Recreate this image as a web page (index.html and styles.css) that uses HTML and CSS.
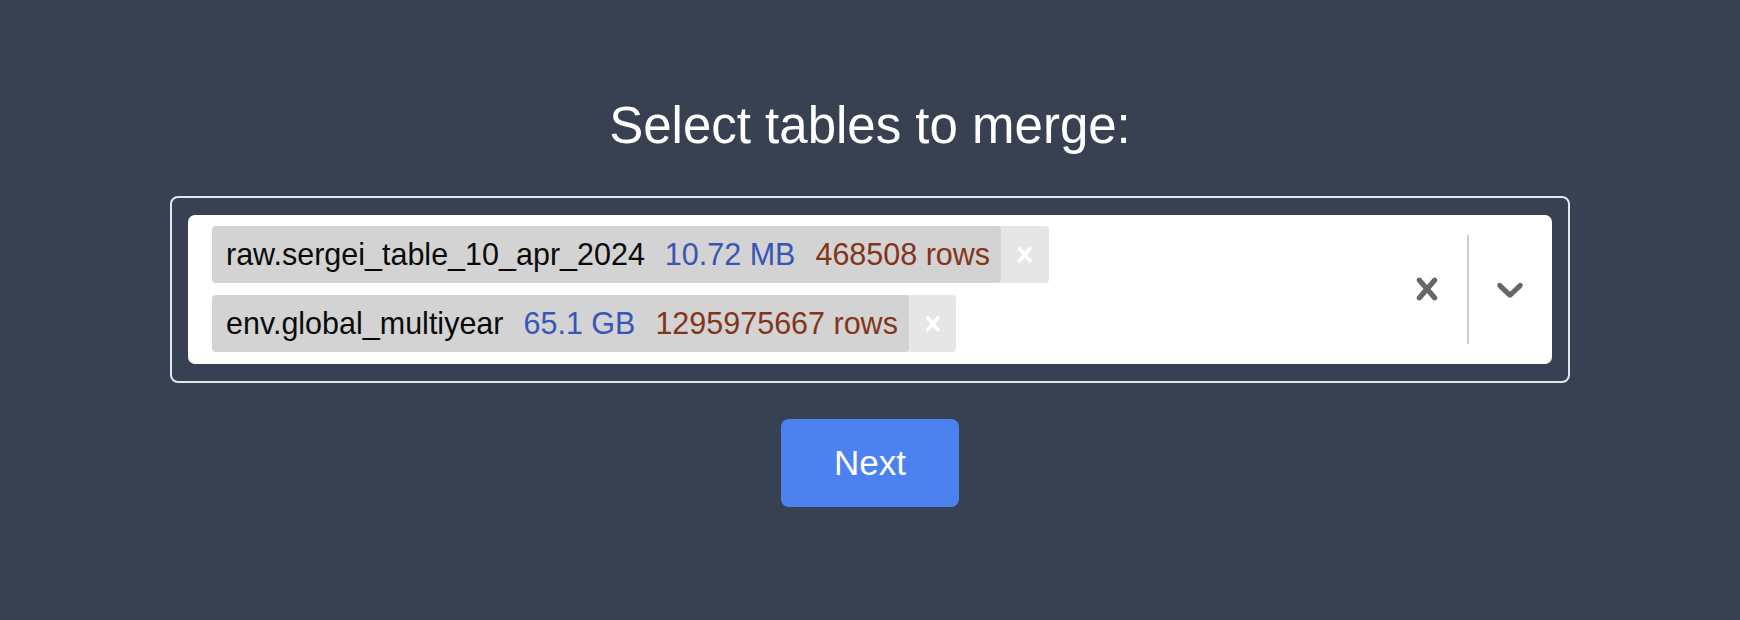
FILE: index.html
```html
<!DOCTYPE html>
<html lang="en">
<head>
<meta charset="utf-8">
<title>Select tables to merge</title>
<link rel="stylesheet" href="styles.css">
</head>
<body>
<main class="page">
  <h1 class="title">Select tables to merge:</h1>
  <div class="select-frame">
    <div class="select-control">
      <div class="values">
        <div class="chip">
          <div class="chip-label">
            <span class="tbl-name">raw.sergei_table_10_apr_2024</span>
            <span class="tbl-size">10.72 MB</span>
            <span class="tbl-rows">468508 rows</span>
          </div>
          <div class="chip-remove">
            <svg class="chip-x" viewBox="0 0 20 20" aria-hidden="true"><path d="M14.348 14.849c-0.469 0.469-1.229 0.469-1.697 0l-2.651-3.030-2.651 3.029c-0.469 0.469-1.229 0.469-1.697 0-0.469-0.469-0.469-1.229 0-1.697l2.758-3.15-2.759-3.152c-0.469-0.469-0.469-1.228 0-1.697s1.228-0.469 1.697 0l2.652 3.031 2.651-3.031c0.469-0.469 1.228-0.469 1.697 0s0.469 1.229 0 1.697l-2.758 3.152 2.758 3.150c0.469 0.469 0.469 1.229 0 1.698z"/></svg>
          </div>
        </div>
        <div class="chip">
          <div class="chip-label">
            <span class="tbl-name">env.global_multiyear</span>
            <span class="tbl-size">65.1 GB</span>
            <span class="tbl-rows">1295975667 rows</span>
          </div>
          <div class="chip-remove">
            <svg class="chip-x" viewBox="0 0 20 20" aria-hidden="true"><path d="M14.348 14.849c-0.469 0.469-1.229 0.469-1.697 0l-2.651-3.030-2.651 3.029c-0.469 0.469-1.229 0.469-1.697 0-0.469-0.469-0.469-1.229 0-1.697l2.758-3.15-2.759-3.152c-0.469-0.469-0.469-1.228 0-1.697s1.228-0.469 1.697 0l2.652 3.031 2.651-3.031c0.469-0.469 1.228-0.469 1.697 0s0.469 1.229 0 1.697l-2.758 3.152 2.758 3.150c0.469 0.469 0.469 1.229 0 1.698z"/></svg>
          </div>
        </div>
      </div>
      <div class="indicators">
        <div class="indicator clear">
          <svg class="ind-icon" viewBox="0 0 20 20" aria-hidden="true"><path d="M14.348 14.849c-0.469 0.469-1.229 0.469-1.697 0l-2.651-3.030-2.651 3.029c-0.469 0.469-1.229 0.469-1.697 0-0.469-0.469-0.469-1.229 0-1.697l2.758-3.15-2.759-3.152c-0.469-0.469-0.469-1.228 0-1.697s1.228-0.469 1.697 0l2.652 3.031 2.651-3.031c0.469-0.469 1.228-0.469 1.697 0s0.469 1.229 0 1.697l-2.758 3.152 2.758 3.150c0.469 0.469 0.469 1.229 0 1.698z"/></svg>
        </div>
        <span class="separator"></span>
        <div class="indicator dropdown">
          <svg class="ind-icon" viewBox="0 0 20 20" aria-hidden="true"><path d="M4.516 7.548c0.436-0.446 1.043-0.481 1.576 0l3.908 3.747 3.908-3.747c0.533-0.481 1.141-0.446 1.574 0 0.436 0.445 0.408 1.197 0 1.615-0.406 0.418-4.695 4.502-4.695 4.502-0.217 0.223-0.502 0.335-0.787 0.335s-0.57-0.112-0.789-0.335c0 0-4.287-4.084-4.695-4.502s-0.436-1.17 0-1.615z"/></svg>
        </div>
      </div>
    </div>
  </div>
  <button class="next-btn" type="button">Next</button>
</main>
</body>
</html>
```

FILE: styles.css
```css
html, body {
  margin: 0;
  padding: 0;
  background: #374151;
  height: 100%;
}

body {
  font-family: "Liberation Sans", Arial, sans-serif;
}

.page {
  display: flex;
  flex-direction: column;
  align-items: center;
  padding-top: 96px;
}

.title {
  margin: 0;
  color: #ffffff;
  font-size: 51px;
  font-weight: 400;
  line-height: 60.6px;
}

.select-frame {
  box-sizing: border-box;
  width: 1400px;
  margin-top: 39px;
  border: 2px solid #e3e5ea;
  border-radius: 8px;
  padding: 17px 16px;
}

.select-control {
  display: flex;
  align-items: stretch;
  background: #ffffff;
  border-radius: 7px;
  height: 149px;
}

.values {
  flex: 1;
  display: flex;
  flex-direction: column;
  align-items: flex-start;
  gap: 11.5px;
  padding: 11px 0 11px 24px;
}

.chip {
  display: flex;
  background: #e6e6e6;
  border-radius: 4px;
  overflow: hidden;
}

.chip-label {
  display: flex;
  gap: 20px;
  background: #d3d3d3;
  border-radius: 4px;
  padding: 0 11px 0 14px;
  font-size: 30.5px;
  line-height: 57.5px;
  white-space: nowrap;
  color: #0a0a0a;
}

.tbl-size {
  color: #3a55b8;
}

.tbl-rows {
  color: #82351a;
}

.chip-remove {
  width: 47.5px;
  display: flex;
  align-items: center;
  justify-content: center;
}

.chip-x {
  width: 29.5px;
  height: 29.5px;
  fill: #ffffff;
}

.indicators {
  display: flex;
  align-items: center;
}

.indicator {
  display: flex;
  align-items: center;
  padding: 0 18px;
}

.indicator.dropdown {
  padding: 0 20px 0 19px;
}

.ind-icon {
  width: 44px;
  height: 44px;
  fill: #666666;
}

.separator {
  align-self: stretch;
  width: 2px;
  margin: 20px 0;
  background: #cccccc;
}

.next-btn {
  margin-top: 36px;
  height: 88px;
  padding: 0 53.5px;
  border: none;
  border-radius: 8px;
  background: #4c82ef;
  color: #ffffff;
  font-family: "Liberation Sans", Arial, sans-serif;
  font-size: 35px;
  line-height: 88px;
}
```
